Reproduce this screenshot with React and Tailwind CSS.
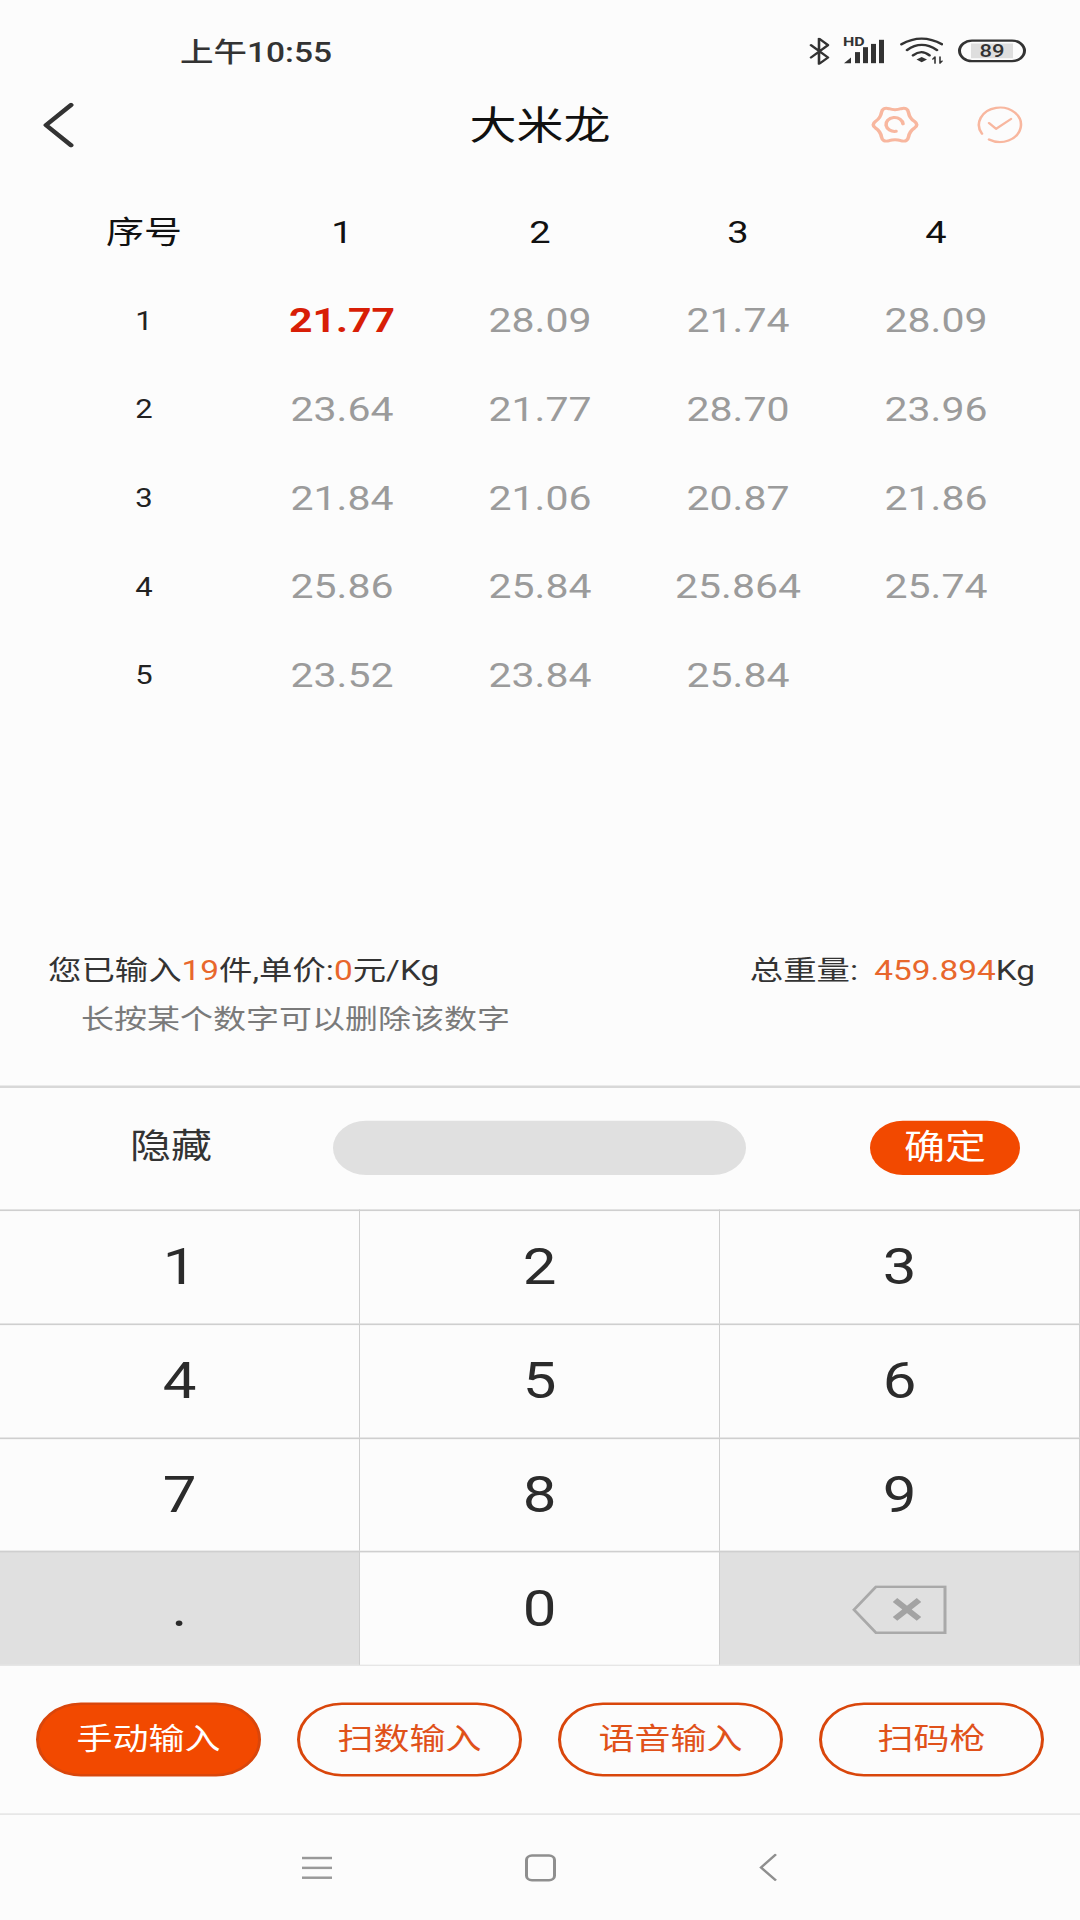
import { useState } from "react"

const rows = [
  ["1", "21.77", "28.09", "21.74", "28.09"],
  ["2", "23.64", "21.77", "28.70", "23.96"],
  ["3", "21.84", "21.06", "20.87", "21.86"],
  ["4", "25.86", "25.84", "25.864", "25.74"],
  ["5", "23.52", "23.84", "25.84", ""],
]

const modes = ["手动输入", "扫数输入", "语音输入", "扫码枪"]

const StatusIcons = () => (
  <div className="absolute left-[809px] top-0 flex h-full items-center">
    {/* bluetooth */}
    <svg width="21" height="33" viewBox="0 0 21 33" fill="none" stroke="#333" strokeWidth="2.6" strokeLinecap="round" strokeLinejoin="round">
      <path d="M2 9 L19 24 L10 32 V1 L19 9 L2 24" />
    </svg>
    {/* signal */}
    <div className="relative ml-[13px] h-[32px] w-[41px]">
      <span className="absolute left-0 top-[-3px] text-[16px] leading-[16px] font-bold whitespace-nowrap text-[#333]">HD</span>
      <svg width="41" height="32" viewBox="0 0 41 32" fill="#333">
        <path d="M1 31 L8 24 V31 Z" />
        <rect x="12" y="17.5" width="5" height="13.5" />
        <rect x="20" y="11.5" width="5" height="19.5" />
        <rect x="28" y="7.5" width="5" height="23.5" />
        <rect x="36" y="2.5" width="5" height="28.5" />
      </svg>
    </div>
    {/* wifi */}
    <svg className="ml-[16px]" width="43" height="34" viewBox="0 0 43 34" fill="none" stroke="#333" strokeWidth="2.8" strokeLinecap="round">
      <path d="M1.5 9 Q21.5 -5 42 9" />
      <path d="M7 16 Q21.5 3.5 37 16" />
      <path d="M13 22.5 Q21.5 14.5 29.5 22.5" />
      <path d="M16.5 27.5 L21.7 24.5 L27 27.5 L21.7 31 Z" fill="#333" stroke="none" />
      <path d="M35 32 V25 M32.8 27 L35 24.5 M40 24.5 V32 M42 29.5 L40 32" strokeWidth="1.6" />
    </svg>
    {/* battery */}
    <div className="ml-[15px] flex h-[28px] w-[68px] items-center justify-center rounded-full border-[3px] border-[#333]">
      <div className="flex h-[18px] w-[42px] items-center justify-center bg-[#dedede] text-[22px] leading-none font-medium text-[#333]">
        89
      </div>
    </div>
  </div>
)

const GearIcon = () => (
  <svg width="50" height="52" viewBox="0 0 50 52" fill="none" stroke="#f8b79f" strokeWidth="3.6" strokeLinecap="round">
    <path d="M44.5 22 Q49 26 44.5 30 Q39.5 34 38.5 41 Q37.5 47.5 31 45.5 Q25 43 19 45.5 Q12.5 47.5 11.5 41 Q10.5 34 5.5 30 Q1 26 5.5 22 Q10.5 18 11.5 11 Q12.5 4.5 19 6.5 Q25 9 31 6.5 Q37.5 4.5 38.5 11 Q39.5 18 44.5 22 Z" />
    <path d="M33 25 A8.5 8.5 0 1 0 26 34" />
  </svg>
)

const CheckIcon = () => (
  <svg width="46" height="46" viewBox="0 0 46 46" fill="none" stroke="#f8b79f" strokeWidth="2.6" strokeLinecap="round" strokeLinejoin="round">
    <path d="M12 41 A21 21 0 1 0 5 34" />
    <path d="M12 21 L19 28 L34 16" />
  </svg>
)

const BackspaceIcon = () => (
  <svg width="95" height="60" viewBox="0 0 95 60" fill="none">
    <path d="M2 30 L24 2 H93 V58 H24 Z" stroke="#a9a9a9" strokeWidth="3" />
    <path d="M43 18 L67 41 M67 18 L43 41" stroke="#a3a3a3" strokeWidth="6.5" />
  </svg>
)

const Key = ({ label, grey, children }) => (
  <div
    className={`flex items-center justify-center border-t-2 border-r border-[#cfcfcf] pt-[2px] text-[60px] leading-none text-[#2b2b2b] ${
      grey ? "bg-[#e0e0e0]" : ""
    }`}
  >
    {label}
    {children}
  </div>
)

const App = () => {
  const [mode] = useState(0)

  return (
    <div className="h-[1920px] w-[1080px] overflow-hidden bg-[#fcfcfc]">
      {/* the capture is squashed vertically, so lay out at 2340 tall */}
      <div className="flex h-[2340px] w-[1080px] origin-top scale-y-[0.8205] flex-col font-[family-name:Roboto,'Noto_Sans_CJK_SC',sans-serif] text-[#222]">
        {/* Status bar */}
        <div className="relative mt-[14px] h-[96px] shrink-0">
          <div className="absolute left-[180px] top-[3px] flex h-full items-center text-[33.5px] font-medium text-[#333]">
            上午10:55
          </div>
          <StatusIcons />
        </div>

        {/* Header */}
        <div className="relative flex h-[84px] shrink-0 items-center justify-center">
          <svg className="absolute left-[43px]" width="31" height="55" viewBox="0 0 31 55" fill="none" stroke="#333" strokeWidth="5" strokeLinecap="round" strokeLinejoin="round">
            <path d="M28 3 L3 27.5 L28 52" />
          </svg>
          <h1 className="text-[47px] leading-none font-normal text-[#111]">大米龙</h1>
          <div className="absolute left-[870px] flex items-center gap-[57px]">
            <GearIcon />
            <CheckIcon />
          </div>
        </div>

        {/* Table */}
        <div className="mt-[36px] ml-[45px] w-[990px] shrink-0">
          <div className="grid h-[108px] grid-cols-5 items-center pb-[2px] text-center text-[38px] text-[#111]">
            <span>序号</span>
            <span>1</span>
            <span>2</span>
            <span>3</span>
            <span>4</span>
          </div>
          {rows.map((row, i) => (
            <div key={row[0]} className="grid h-[108px] grid-cols-5 items-center text-center text-[41px] text-[#9b9b9b]">
              {row.map((cell, j) => {
                if (j === 0) return <span key={j} className="text-[31px] text-[#222]">{cell}</span>
                if (i === 0 && j === 1) return <span key={j} className="font-bold text-[#d81e06]">{cell}</span>
                return <span key={j}>{cell}</span>
              })}
            </div>
          ))}
        </div>

        {/* Summary */}
        <div className="mt-[275px] shrink-0 text-[33px] leading-[60px]">
          <div className="flex justify-between pr-[45px] pl-[48px] text-[33.4px] text-[#333]">
            <span>
              您已输入<span className="text-[#e8672c]">19</span>件,单价:<span className="text-[#e8672c]">0</span>元/Kg
            </span>
            <span>
              总重量: <span className="ml-[8px] text-[#e8672c]">459.894</span>Kg
            </span>
          </div>
          <div className="pl-[81px] text-[#7a7a7a]">长按某个数字可以删除该数字</div>
        </div>

        {/* Input row */}
        <div className="mt-[50px] flex h-[151px] shrink-0 items-center border-t-[3px] border-[#d8d8d8] pb-[2px]">
          <span className="w-[333px] pb-[2px] pl-[130px] text-[41px] text-[#333]">隐藏</span>
          <div className="h-[66px] w-[413px] rounded-full bg-[#e0e0e0]"></div>
          <button className="ml-[124px] flex h-[66px] w-[150px] items-center justify-center rounded-full bg-[#f24900] text-[41px] text-white">
            确定
          </button>
        </div>

        {/* Keypad */}
        <div className="grid h-[555px] shrink-0 grid-cols-3 grid-rows-4">
          {["1", "2", "3", "4", "5", "6", "7", "8", "9"].map((n) => (
            <Key key={n} label={n} />
          ))}
          <Key label="." grey />
          <Key label="0" />
          <Key grey>
            <BackspaceIcon />
          </Key>
        </div>

        {/* Input modes */}
        <div className="grid h-[181px] shrink-0 grid-cols-4 gap-[36px] border-t border-[#d8d8d8] px-[36px] pt-[45px]">
          {modes.map((m, i) => (
            <button
              key={m}
              className={`flex h-[90px] items-center justify-center rounded-full border-[3px] border-[#d9460b] text-[36px] ${
                i === mode ? "bg-[#f24900] text-white" : "text-[#e0511a]"
              }`}
            >
              {m}
            </button>
          ))}
        </div>

        {/* Nav bar */}
        <div className="relative flex h-[130px] shrink-0 items-center justify-center border-t-2 border-[#e6e6e6]">
          <div className="absolute left-[302px] flex h-[27px] w-[30px] flex-col justify-between">
            <div className="h-[3px] bg-[#999]"></div>
            <div className="h-[3px] bg-[#999]"></div>
            <div className="h-[3px] bg-[#999]"></div>
          </div>
          <div className="h-[33px] w-[31px] rounded-[7px] border-[3px] border-[#8f8f8f]"></div>
          <svg className="absolute left-[759px]" width="18" height="34" viewBox="0 0 18 34" fill="none" stroke="#8f8f8f" strokeWidth="2.6">
            <path d="M17 1 L2 17 L17 33" />
          </svg>
        </div>
      </div>
    </div>
  )
}

export default App
